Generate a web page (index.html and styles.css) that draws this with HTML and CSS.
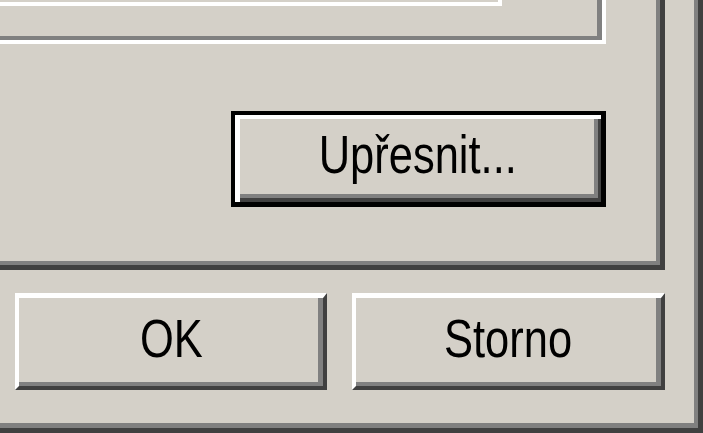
FILE: index.html
```html
<!DOCTYPE html>
<html lang="cs">
<head>
<meta charset="utf-8">
<title>Dialog</title>
<link rel="stylesheet" href="styles.css">
</head>
<body>
<div class="dialog">
  <div class="tab-page">
    <div class="tab-inner">
      <div class="group-box">
        <div class="list-box"></div>
      </div>
      <button class="btn btn-default" type="button"><span class="label">Upřesnit...</span></button>
    </div>
  </div>
  <div class="button-row">
    <button class="btn btn-ok" type="button"><span class="label">OK</span></button>
    <button class="btn btn-cancel" type="button"><span class="label">Storno</span></button>
  </div>
</div>
</body>
</html>
```

FILE: styles.css
```css
html, body {
  margin: 0;
  padding: 0;
  background: #d4d0c8;
}

body {
  width: 703px;
  height: 433px;
  overflow: hidden;
  font-family: "Liberation Sans", Arial, sans-serif;
  color: #000;
}

.dialog {
  box-sizing: border-box;
  width: 703px;
  height: 433px;
  display: flex;
  flex-direction: column;
  border-right: 5px solid #404040;
  border-bottom: 5px solid #404040;
  box-shadow: inset -4px -5px 0 #808080;
}

.tab-page {
  box-sizing: border-box;
  width: 665px;
  height: 270px;
  border-right: 5px solid #404040;
  border-bottom: 5px solid #404040;
  box-shadow: inset -4px -4px 0 #808080;
}

.tab-inner {
  width: 606px;
  display: flex;
  flex-direction: column;
  align-items: flex-end;
}

.group-box {
  box-sizing: border-box;
  width: 606px;
  height: 44px;
  border-right: 4px solid #fff;
  border-bottom: 4px solid #fff;
  box-shadow: inset -5px -4px 0 #808080;
}

.list-box {
  box-sizing: border-box;
  width: 502px;
  height: 6px;
  border-right: 4px solid #fff;
  border-bottom: 4px solid #fff;
}

.btn {
  box-sizing: border-box;
  margin: 0;
  padding: 0;
  display: flex;
  justify-content: center;
  align-items: flex-start;
  background: #d4d0c8;
  font-family: "Liberation Sans", Arial, sans-serif;
  font-size: 53px;
  line-height: 53px;
  color: #000;
  cursor: default;
  outline: none;
}

.label {
  display: inline-block;
  white-space: nowrap;
  transform: scaleX(0.82);
}

.btn-default {
  width: 375px;
  height: 96px;
  margin-top: 67px;
  padding-top: 13px;
  border-style: solid;
  border-color: #000;
  border-width: 4px 5px 5px 4px;
  box-shadow:
    inset 5px 4px 0 #fff,
    inset -3px -4px 0 #404040,
    inset -7px -8px 0 #808080;
}

.button-row {
  display: flex;
  gap: 25px;
  margin-top: 23px;
  padding-left: 15px;
}

.btn-ok,
.btn-cancel {
  height: 97px;
  padding-top: 14px;
  border-style: solid;
  border-width: 5px 4px 4px 4px;
  border-color: #fff #404040 #404040 #fff;
  box-shadow: inset -5px -4px 0 #808080;
}

.btn-ok {
  width: 312px;
}

.btn-cancel {
  width: 313px;
}
```
